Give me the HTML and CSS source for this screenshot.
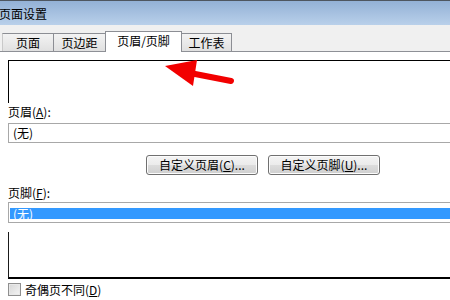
FILE: index.html
```html
<!DOCTYPE html>
<html lang="zh-CN">
<head>
<meta charset="utf-8">
<title>页面设置</title>
<link rel="stylesheet" href="styles.css">
</head>
<body>
<div class="window">
  <div class="titlebar"><span class="title">页面设置</span></div>
  <div class="tabstrip">
    <div class="tab t1">页面</div>
    <div class="tab t2">页边距</div>
    <div class="tab active t3">页眉/页脚</div>
    <div class="tab t4">工作表</div>
  </div>
  <div class="panel">
    <div class="preview head-preview"></div>
    <div class="label">页眉(<u>A</u>):</div>
    <div class="combo"><span class="combo-text">(无)</span></div>
    <div class="btnrow">
      <div class="btn">自定义页眉(<u>C</u>)...</div>
      <div class="btn">自定义页脚(<u>U</u>)...</div>
    </div>
    <div class="label label-foot">页脚(<u>F</u>):</div>
    <div class="combo combo-foot"><span class="sel">(无)</span></div>
    <div class="preview foot-preview"></div>
    <div class="checkrow">
      <span class="checkbox"></span>
      <span class="checklabel">奇偶页不同(<u>D</u>)</span>
    </div>
  </div>
  <svg class="arrow" width="450" height="300" viewBox="0 0 450 300">
    <line x1="190" y1="73" x2="231" y2="81" stroke="#f20000" stroke-width="6" stroke-linecap="round"/>
    <polygon points="165,66 197,60 193,86" fill="#f20000"/>
  </svg>
</div>
</body>
</html>
```

FILE: styles.css
```css
html, body {
  margin: 0;
  padding: 0;
  width: 450px;
  height: 300px;
  overflow: hidden;
  background: #ffffff;
}

.window {
  position: relative;
  width: 450px;
  height: 300px;
  overflow: hidden;
  font-family: "Noto Sans CJK SC", "DejaVu Sans", sans-serif;
  font-size: 12px;
  color: #000;
}

u {
  text-decoration: underline;
}

.titlebar {
  height: 24px;
  border-top: 1px solid #4e5660;
  background: linear-gradient(#93b1d6, #b9d0ea);
  display: flex;
  align-items: center;
}

.title {
  margin-left: -1px;
  line-height: 14px;
  padding-top: 2px;
}

.tabstrip {
  height: 26px;
  background: #f0f0f0;
  border-bottom: 1px solid #8e9096;
  display: flex;
  align-items: flex-end;
  padding-left: 2px;
}

.tab {
  box-sizing: border-box;
  height: 18px;
  border: 1px solid #8c8e94;
  border-bottom: none;
  background: linear-gradient(#f3f3f3, #e0e0e0);
  display: flex;
  align-items: center;
  justify-content: center;
  line-height: 14px;
  margin-left: -1px;
}

.t1 { width: 52px; margin-left: 0; border-left-color: #c9c9c9; }
.t2 { width: 53px; }
.t3 { width: 77px; }
.t4 { width: 51px; }

.tab.active {
  height: 21px;
  margin-bottom: -1px;
  background: #ffffff;
  padding-bottom: 2px;
  position: relative;
  z-index: 1;
}

.panel {
  background: #ffffff;
  padding-left: 8px;
  height: 248px;
  overflow: hidden;
}

.preview {
  box-sizing: border-box;
  margin-right: -4px;
}

.head-preview {
  margin-top: 8px;
  height: 43px;
  border-top: 1px solid #000;
  border-left: 1px solid #000;
}

.label {
  margin-top: 2px;
  line-height: 14px;
  height: 14px;
}

.combo {
  box-sizing: border-box;
  margin-top: 4px;
  margin-right: -4px;
  height: 20px;
  border: 1px solid #a8a8a8;
  display: flex;
  align-items: center;
}

.combo-text {
  padding-left: 4px;
  line-height: 14px;
}

.btnrow {
  display: flex;
  gap: 10px;
  margin-top: 12px;
  margin-left: 138px;
}

.btn {
  box-sizing: border-box;
  width: 112px;
  height: 20px;
  border: 1px solid #707070;
  border-radius: 3px;
  background: linear-gradient(#f4f4f4 0%, #ebebeb 50%, #dcdcdc 52%, #cfcfcf 100%);
  box-shadow: inset 0 0 0 1px #fcfcfc;
  display: flex;
  align-items: center;
  justify-content: center;
  line-height: 14px;
}

.label-foot {
  margin-top: 11px;
}

.combo-foot {
  margin-top: 2px;
  height: 21px;
  padding: 0 0 0 1px;
  align-items: center;
}

.sel {
  display: block;
  flex: 1;
  height: 11px;
  line-height: 11px;
  background: #3399ff;
  color: #ffffff;
  padding-left: 3px;
  margin-top: 1px;
}

.foot-preview {
  margin-top: 9px;
  height: 47px;
  border-left: 1px solid #1a1a1a;
  border-bottom: 2px solid #000;
}

.checkrow {
  margin-top: 4px;
  display: flex;
  align-items: center;
  height: 13px;
}

.checkbox {
  box-sizing: border-box;
  width: 13px;
  height: 13px;
  border: 1px solid #8f8f8f;
  background: linear-gradient(135deg, #d6d6d6, #f4f4f4);
  box-shadow: inset 0 0 0 1px #e8e8e8;
}

.checklabel {
  margin-left: 4px;
  line-height: 14px;
}

.arrow {
  position: absolute;
  left: 0;
  top: 0;
  pointer-events: none;
  z-index: 5;
}
```
